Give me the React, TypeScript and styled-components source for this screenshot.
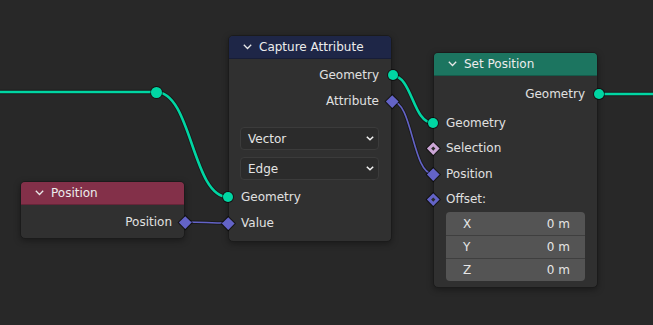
import styled, { createGlobalStyle } from 'styled-components'

const GlobalStyle = createGlobalStyle`
  html, body {
    margin: 0;
    padding: 0;
    background: #282828;
  }
  body {
    font-family: "DejaVu Sans", "Liberation Sans", sans-serif;
    font-size: 12px;
    color: #e0e0e0;
  }
`

const Canvas = styled.div`
  position: relative;
  width: 653px;
  height: 325px;
  overflow: hidden;
  background: #282828;
`

const Wires = styled.svg`
  position: absolute;
  left: 0;
  top: 0;
`

const Node = styled.div<{ $x: number; $y: number; $w: number }>`
  position: absolute;
  left: ${p => p.$x}px;
  top: ${p => p.$y}px;
  width: ${p => p.$w}px;
  box-sizing: border-box;
  background: #303030;
  border: 1px solid #1b1b1b;
  border-radius: 5px;
  box-shadow: 0 2px 6px rgba(0, 0, 0, 0.35);
  display: flex;
  flex-direction: column;
`

const Header = styled.div<{ $color: string }>`
  height: 23px;
  box-sizing: border-box;
  background: ${p => p.$color};
  border-radius: 4px 4px 0 0;
  border-bottom: 1px solid rgba(0, 0, 0, 0.22);
  display: flex;
  align-items: center;
  gap: 7px;
  padding-left: 14px;
  color: #ececec;
  white-space: nowrap;
`

const Body = styled.div<{ $top: number; $bottom: number }>`
  display: flex;
  flex-direction: column;
  padding: ${p => p.$top}px 0 ${p => p.$bottom}px;
`

const Row = styled.div<{ $out?: boolean; $h?: number; $mt?: number }>`
  position: relative;
  height: ${p => p.$h ?? 26}px;
  margin-top: ${p => p.$mt ?? 0}px;
  display: flex;
  align-items: center;
  justify-content: ${p => (p.$out ? 'flex-end' : 'flex-start')};
  padding: 0 12px;
  white-space: nowrap;
`

const Circle = styled.span<{ $out?: boolean }>`
  position: absolute;
  top: 50%;
  ${p => (p.$out ? 'right: -6.5px;' : 'left: -6.5px;')}
  width: 10px;
  height: 10px;
  margin-top: -5px;
  border-radius: 50%;
  background: #00d6a3;
  box-shadow: 0 0 0 1px rgba(0, 0, 0, 0.55);
`

const Diamond = styled.span<{ $out?: boolean; $color: string; $dot?: boolean }>`
  position: absolute;
  top: 50%;
  ${p => (p.$out ? 'right: -5.5px;' : 'left: -5.5px;')}
  width: 8.5px;
  height: 8.5px;
  margin-top: -4.25px;
  transform: rotate(45deg);
  background: ${p => p.$color};
  box-shadow: 0 0 0 1px rgba(0, 0, 0, 0.55);
  &::after {
    content: '';
    display: ${p => (p.$dot ? 'block' : 'none')};
    position: absolute;
    left: 2.75px;
    top: 2.75px;
    width: 3px;
    height: 3px;
    background: #2b2b2b;
  }
`

const Dropdown = styled.div<{ $mt: number }>`
  height: 23px;
  box-sizing: border-box;
  margin: ${p => p.$mt}px 12px 0 11px;
  padding: 0 4px 0 7px;
  background: #2b2b2b;
  border: 1px solid #3b3b3b;
  border-radius: 4px;
  display: flex;
  align-items: center;
  justify-content: space-between;
  color: #e4e4e4;
`

const VectorField = styled.div`
  margin: 0 12px;
  background: #545454;
  border-radius: 4px;
  display: flex;
  flex-direction: column;
  overflow: hidden;
`

const VectorRow = styled.div`
  height: 23px;
  box-sizing: border-box;
  display: flex;
  align-items: center;
  justify-content: space-between;
  padding: 0 15px 0 17px;
  color: #e6e6e6;
  & + & {
    border-top: 1px solid #3f3f3f;
  }
`

const Reroute = styled.span<{ $x: number; $y: number }>`
  position: absolute;
  left: ${p => p.$x - 5.5}px;
  top: ${p => p.$y - 5.5}px;
  width: 11px;
  height: 11px;
  border-radius: 50%;
  background: #00d6a3;
  box-shadow: 0 0 0 1px rgba(0, 0, 0, 0.5);
`

function Chevron() {
  return (
    <svg width="9" height="6" viewBox="0 0 9 6">
      <path d="M0.8 0.8 L4.5 4.5 L8.2 0.8" fill="none" stroke="#e8e8e8" strokeWidth="1.3" />
    </svg>
  )
}

function SmallChevron() {
  return (
    <svg width="8" height="5" viewBox="0 0 8 5">
      <path d="M0.8 0.8 L4 3.8 L7.2 0.8" fill="none" stroke="#f4f4f4" strokeWidth="1.5" />
    </svg>
  )
}

function wire(x1: number, y1: number, x2: number, y2: number) {
  const h = Math.abs(x2 - x1) * 0.5
  return `M${x1} ${y1} C${x1 + h} ${y1}, ${x2 - h} ${y2}, ${x2} ${y2}`
}

const GREEN = '#00d6a3'
const PURPLE = '#6363c7'

const links = [
  { d: 'M0 92 L156 92', c: GREEN },
  { d: wire(156, 92, 228, 197), c: GREEN },
  { d: wire(392, 75.5, 433, 123), c: GREEN },
  { d: 'M598 94 L653 94', c: GREEN },
  { d: wire(392, 101, 433, 174), c: PURPLE },
  { d: wire(185, 222, 228, 223), c: PURPLE },
]

export default function App() {
  return (
    <Canvas>
      <GlobalStyle />
      <Wires width={653} height={325}>
        {links.map((l, i) => (
          <g key={i} fill="none">
            <path d={l.d} stroke="rgba(0,0,0,0.35)" strokeWidth={l.c === GREEN ? 4.5 : 3.5} />
            <path d={l.d} stroke={l.c} strokeWidth={l.c === GREEN ? 2.6 : 1.6} />
          </g>
        ))}
      </Wires>
      <Reroute $x={156} $y={92} />

      <Node $x={20} $y={181} $w={165}>
        <Header $color="#833049">
          <Chevron />
          Position
        </Header>
        <Body $top={4} $bottom={3}>
          <Row $out>
            Position
            <Diamond $out $color={PURPLE} />
          </Row>
        </Body>
      </Node>

      <Node $x={228} $y={35} $w={164}>
        <Header $color="#1e2647">
          <Chevron />
          Capture Attribute
        </Header>
        <Body $top={3} $bottom={5}>
          <Row $out>
            Geometry
            <Circle $out />
          </Row>
          <Row $out>
            Attribute
            <Diamond $out $color={PURPLE} />
          </Row>
          <Dropdown $mt={13}>
            Vector
            <SmallChevron />
          </Dropdown>
          <Dropdown $mt={7}>
            Edge
            <SmallChevron />
          </Dropdown>
          <Row $mt={4}>
            <Circle />
            Geometry
          </Row>
          <Row>
            <Diamond $color={PURPLE} />
            Value
          </Row>
        </Body>
      </Node>

      <Node $x={433} $y={52} $w={165}>
        <Header $color="#1c7560">
          <Chevron />
          Set Position
        </Header>
        <Body $top={5} $bottom={6}>
          <Row $out>
            Geometry
            <Circle $out />
          </Row>
          <Row $mt={3} $h={25.5}>
            <Circle />
            Geometry
          </Row>
          <Row $h={25.5}>
            <Diamond $color="#cca6d6" $dot />
            Selection
          </Row>
          <Row $h={25.5}>
            <Diamond $color={PURPLE} />
            Position
          </Row>
          <Row $h={25.5}>
            <Diamond $color={PURPLE} $dot />
            Offset:
          </Row>
          <VectorField>
            <VectorRow>
              <span>X</span>
              <span>0 m</span>
            </VectorRow>
            <VectorRow>
              <span>Y</span>
              <span>0 m</span>
            </VectorRow>
            <VectorRow>
              <span>Z</span>
              <span>0 m</span>
            </VectorRow>
          </VectorField>
        </Body>
      </Node>
    </Canvas>
  )
}
